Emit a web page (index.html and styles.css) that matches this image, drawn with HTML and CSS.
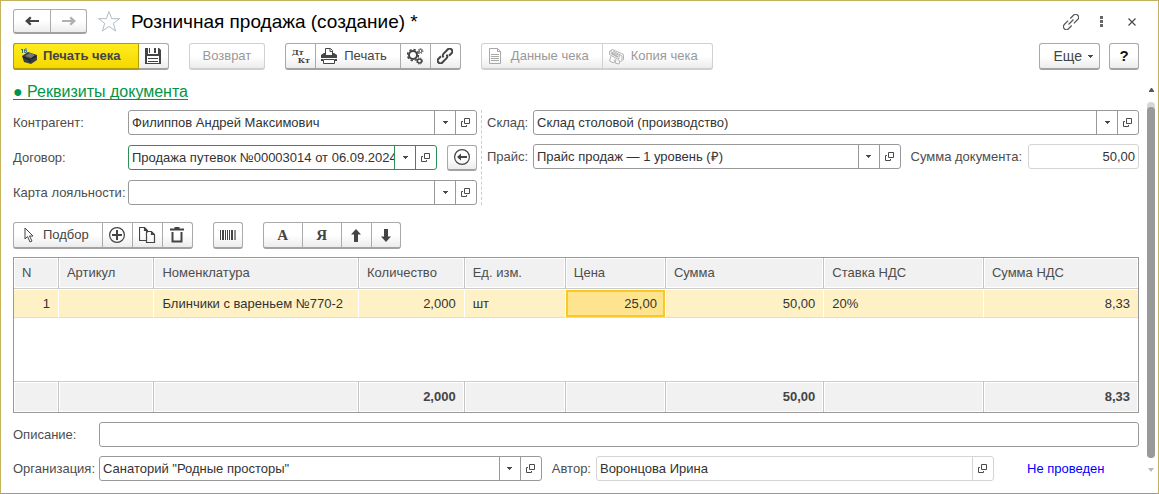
FILE: index.html
```html
<!DOCTYPE html>
<html lang="ru">
<head>
<meta charset="utf-8">
<title>Розничная продажа (создание) *</title>
<link rel="stylesheet" href="styles.css">
</head>
<body>
<svg class="sprite" aria-hidden="true">
  <symbol id="open" viewBox="0 0 10 10"><path d="M3.5 .5h5v5h-5zM2 3.500H.5v5h5V7" fill="none" stroke="#4a4a4a"/></symbol>
  <symbol id="caret" viewBox="0 0 5 3"><path d="M0 0h5v1H4v1H3v1H2V2H1V1H0z" fill="#4a4a4a"/></symbol>
</svg>
<main class="window">
  <header class="titlebar">
    <div class="group nav">
      <button class="btn" type="button" aria-label="Назад"><svg width="14" height="10" viewBox="0 0 14 10"><path d="M14 5H3" stroke="#444" stroke-width="2"/><path d="M0 5l5-4.500L6.500 2 4 5l2.500 3L5 9.500z" fill="#444"/></svg></button>
      <button class="btn" type="button" aria-label="Вперед"><svg width="14" height="10" viewBox="0 0 14 10"><path d="M0 5h11" stroke="#b0b0b0" stroke-width="2"/><path d="M14 5L9 .5 7.500 2 10 5 7.500 8 9 9.500z" fill="#b0b0b0"/></svg></button>
    </div>
    <button class="plain" type="button" aria-label="В избранное"><svg width="24" height="23" viewBox="0 0 24 23"><path d="M12 1.500l2.700 7.200h7.800l-6.200 4.700 2.300 7.600-6.600-4.600L5.400 21l2.300-7.600-6.200-4.700h7.800z" fill="#fff" stroke="#b4bac2"/></svg></button>
    <h1 class="title">Розничная продажа (создание) *</h1>
    <div class="tools">
      <button class="plain" type="button" aria-label="Ссылка"><svg width="16" height="16" viewBox="0 0 16 16"><g fill="none" stroke="#555" stroke-width="1.200" transform="rotate(-45 8 8)"><path d="M7 5H1.500a3 3 0 0 0 0 6H6M9 11h5.500a3 3 0 0 0 0-6H10M4.500 8h7"/></g></svg></button>
      <button class="plain" type="button" aria-label="Меню"><svg width="3" height="11" viewBox="0 0 3 11"><path d="M0 0h3v3H0zM0 4h3v3H0zM0 8h3v3H0z" fill="#666"/></svg></button>
      <button class="plain" type="button" aria-label="Закрыть"><svg width="8" height="8" viewBox="0 0 8 8"><path d="M.5.5l7 7M7.500.5l-7 7" stroke="#444" stroke-width="1.100"/></svg></button>
    </div>
  </header>

  <div class="toolbar">
    <div class="group">
      <button class="btn primary" type="button"><svg width="17" height="16" viewBox="0 0 17 16"><path d="M1 8l6-4 9 3v5l-6 4-7-2z" fill="#3a3d40"/><path d="M4 8l5-3 5 2-4 3z" fill="#777"/><path d="M2 9l7 3v2M10 11l5-3" stroke="#15181a" fill="none"/><path d="M0 1.500h2M1.500 1v4" stroke="#2d7a4a"/><path d="M4 1h2M3.500 1v3.500h2v-2h-2" stroke="#3b7bb0" fill="none"/></svg><span>Печать чека</span></button>
      <button class="btn icon" type="button" aria-label="Записать"><svg width="16" height="16" viewBox="0 0 16 16"><path d="M0 0h3v6h10V0h1l2 2v14H0z" fill="#444"/><path d="M9 0h2v5H9zM4 0h1v5H4z" fill="#444"/><path d="M2 8h12v7H2z" fill="#fff"/><path d="M3 10.500h10M3 13.500h10" stroke="#444"/></svg></button>
    </div>
    <div class="group"><button class="btn wide" type="button" disabled>Возврат</button></div>
    <div class="group">
      <button class="btn icon dtkt" type="button"><span class="dt">Дт</span><span class="kt">Кт</span></button>
      <button class="btn print" type="button"><svg width="16" height="16" viewBox="0 0 16 16"><path d="M4.500 6V.5h5l2 2V6M9 1v2.500h3" fill="none" stroke="#444"/><path d="M3 5h2v2h6V5h2l3 2v3H0V7zM0 11h2v1h12v-1h2v2H0z" fill="#444"/><path d="M2.500 11.500h11v4h-11z" fill="#fff" stroke="#444"/></svg><span>Печать</span></button>
      <button class="btn icon" type="button" aria-label="Настройки"><svg width="17" height="17" viewBox="0 0 17 17" fill="none" stroke="#444"><circle cx="6" cy="7" r="4" stroke-width="2"/><circle cx="6" cy="7" r="5.500" stroke-width="1.500" stroke-dasharray="2.300 2"/><circle cx="13.500" cy="3" r="1.500"/><circle cx="13.500" cy="3" r="2.400" stroke-dasharray="1 1"/><circle cx="12.500" cy="13" r="2" stroke-width="1.400"/><circle cx="12.500" cy="13" r="3" stroke-dasharray="1.300 1.100"/></svg></button>
      <button class="btn icon" type="button" aria-label="Связи"><svg width="16" height="16" viewBox="0 0 16 16"><g fill="none" stroke="#444" stroke-width="2" transform="rotate(-45 8 8)"><path d="M10 8a2.700 2.700 0 0 1-2.700 2.700H1.500a2.700 2.700 0 0 1 0-5.400H5M6 8a2.700 2.700 0 0 1 2.700-2.700h5.800a2.700 2.700 0 0 1 0 5.400H11"/></g></svg></button>
    </div>
    <div class="group">
      <button class="btn doc" type="button" disabled><svg width="12" height="16" viewBox="0 0 12 16"><path d="M.5.5h8l3 3v12H.5zM8.500.5v3h3M2 6.500h8M2 8.500h8M2 10.500h8M2 12.500h8" fill="none" stroke="#a8a8a8"/></svg><span>Данные чека</span></button>
      <button class="btn copy" type="button" disabled><svg width="17" height="17" viewBox="0 0 17 17" fill="none" stroke="#b4b4b4"><path d="M1.500 3.500l3-2 11 5v5l-3 2-2-1M1.500 3.500v3l9 5 1-4-9-4M4.500 1.500l-3 2M5 3l9 5v4M3 8l-1.500 5 4 2 2-4M8 12l-1 3 4 1 1-3"/><path d="M3 5l7 4" stroke-width="2"/></svg><span>Копия чека</span></button>
    </div>
    <div class="group end"><button class="btn more" type="button"><span>Еще</span><svg width="5" height="3"><use href="#caret"/></svg></button></div>
    <div class="group help"><button class="btn icon" type="button">?</button></div>
  </div>

  <div class="body">
    <div class="content">
      <a class="section" href="#details">● Реквизиты документа</a>
      <div class="details" id="details">
        <div class="left">
          <label for="f1">Контрагент:</label>
          <div class="field"><input id="f1" value="Филиппов Андрей Максимович"><button type="button" aria-label="Выбрать"><svg width="5" height="3"><use href="#caret"/></svg></button><button type="button" aria-label="Открыть"><svg width="10" height="10"><use href="#open"/></svg></button></div>
          <label for="f2">Договор:</label>
          <div class="pair">
            <div class="field active"><input id="f2" value="Продажа путевок №00003014 от 06.09.2024"><button type="button" aria-label="Выбрать"><svg width="5" height="3"><use href="#caret"/></svg></button><button type="button" aria-label="Открыть"><svg width="10" height="10"><use href="#open"/></svg></button></div>
            <div class="group"><button class="btn icon" type="button" aria-label="Заполнить"><svg width="16" height="16" viewBox="0 0 16 16"><circle cx="8" cy="8" r="7.400" fill="none" stroke="#444" stroke-width="1.200"/><path d="M13 7v2H7v2.500L3 8l4-3.500V7z" fill="#444"/></svg></button></div>
          </div>
          <label for="f3">Карта лояльности:</label>
          <div class="field"><input id="f3"><button type="button" aria-label="Выбрать"><svg width="5" height="3"><use href="#caret"/></svg></button><button type="button" aria-label="Открыть"><svg width="10" height="10"><use href="#open"/></svg></button></div>
        </div>
        <div class="right">
          <label for="f4">Склад:</label>
          <div class="field"><input id="f4" value="Склад столовой (производство)"><button type="button" aria-label="Выбрать"><svg width="5" height="3"><use href="#caret"/></svg></button><button type="button" aria-label="Открыть"><svg width="10" height="10"><use href="#open"/></svg></button></div>
          <label for="f5">Прайс:</label>
          <div class="pair">
            <div class="field"><input id="f5" value="Прайс продаж — 1 уровень (₽)"><button type="button" aria-label="Выбрать"><svg width="5" height="3"><use href="#caret"/></svg></button><button type="button" aria-label="Открыть"><svg width="10" height="10"><use href="#open"/></svg></button></div>
            <label for="f6">Сумма документа:</label>
            <div class="field readonly sum"><input id="f6" value="50,00" readonly></div>
          </div>
        </div>
      </div>

      <div class="toolbar commands">
        <div class="group">
          <button class="btn pick" type="button"><svg width="10" height="16" viewBox="0 0 10 16"><path d="M1 1v11l2.500-2.500L6 15l2-1-2.500-5H9z" fill="#fff" stroke="#444"/></svg><span>Подбор</span></button>
          <button class="btn icon" type="button" aria-label="Добавить"><svg width="16" height="16" viewBox="0 0 16 16"><circle cx="8" cy="8" r="7.400" fill="none" stroke="#444" stroke-width="1.200"/><path d="M8 3v10M3 8h10" stroke="#444" stroke-width="2"/></svg></button>
          <button class="btn icon" type="button" aria-label="Скопировать"><svg width="17" height="16" viewBox="0 0 17 16"><path d="M7.500 13.500h-7V.5h5l3 3v2M5.500.5v3h3M7.500 4.500h5l3 3v8h-8zM12.500 4.500v3h3" fill="none" stroke="#444" stroke-width="1.200"/></svg></button>
          <button class="btn icon" type="button" aria-label="Удалить"><svg width="14" height="16" viewBox="0 0 14 16"><path d="M0 2.500h14M4.500 1h5" stroke="#444" stroke-width="2"/><path d="M2.500 5v9.500h9V5" fill="none" stroke="#444" stroke-width="2"/></svg></button>
        </div>
        <div class="group"><button class="btn icon" type="button" aria-label="Штрихкод"><svg width="16" height="10" viewBox="0 0 16 10"><path d="M0 0h1v10H0zM2 0h2v10H2zM5 0h1v10H5zM7 0h1v10H7zM9 0h1v10H9zM11 0h2v10h-2zM14 0h.6v10H14zM15.400 0h.6v10h-.6z" fill="#444"/></svg></button></div>
        <div class="group">
          <button class="btn letter" type="button">А</button>
          <button class="btn letter" type="button">Я</button>
          <button class="btn icon" type="button" aria-label="Вверх"><svg width="10" height="13" viewBox="0 0 10 13"><path d="M5 0l5 5.500H7V13H3V5.500H0z" fill="#444"/></svg></button>
          <button class="btn icon last" type="button" aria-label="Вниз"><svg width="10" height="13" viewBox="0 0 10 13"><path d="M5 13l5-5.500H7V0H3v7.500H0z" fill="#444"/></svg></button>
        </div>
      </div>

      <table class="goods">
        <colgroup><col class="c1"><col class="c2"><col class="c3"><col class="c4"><col class="c5"><col class="c6"><col class="c7"><col class="c8"><col></colgroup>
        <thead><tr><th>N</th><th>Артикул</th><th>Номенклатура</th><th>Количество</th><th>Ед. изм.</th><th>Цена</th><th>Сумма</th><th>Ставка НДС</th><th>Сумма НДС</th></tr></thead>
        <tbody>
          <tr class="selected"><td class="num">1</td><td></td><td>Блинчики с вареньем №770-2</td><td class="num">2,000</td><td>шт</td><td class="num current">25,00</td><td class="num">50,00</td><td>20%</td><td class="num">8,33</td></tr>
          <tr class="empty"><td colspan="9"></td></tr>
        </tbody>
        <tfoot><tr><td></td><td></td><td></td><td class="num">2,000</td><td></td><td></td><td class="num">50,00</td><td></td><td class="num">8,33</td></tr></tfoot>
      </table>

      <div class="bottom">
        <label for="f7">Описание:</label>
        <div class="field"><input id="f7"></div>
        <label for="f8">Организация:</label>
        <div class="pair">
          <div class="field org"><input id="f8" value="Санаторий &quot;Родные просторы&quot;"><button type="button" aria-label="Выбрать"><svg width="5" height="3"><use href="#caret"/></svg></button><button type="button" aria-label="Открыть"><svg width="10" height="10"><use href="#open"/></svg></button></div>
          <label for="f9">Автор:</label>
          <div class="field readonly author"><input id="f9" value="Воронцова Ирина" readonly><button type="button" aria-label="Открыть"><svg width="10" height="10"><use href="#open"/></svg></button></div>
          <span class="status">Не проведен</span>
        </div>
      </div>
    </div>
    <div class="scroll" aria-hidden="true">
      <svg width="5" height="4" viewBox="0 0 5 4"><path d="M2 0h1l2 3v1H0V3z" fill="#555"/></svg>
      <div class="track"><div class="thumb"></div></div>
      <svg width="6" height="4" viewBox="0 0 6 4"><path d="M0 0h6L3 4z" fill="#b8b8b8"/></svg>
    </div>
  </div>
</main>
</body>
</html>
```
FILE: styles.css
```css
* { box-sizing: border-box; }

body {
  margin: 0;
  background: #fff;
  color: #333;
  font: 13px/16px "Liberation Sans", Arial, sans-serif;
}

button, input { font: inherit; color: inherit; margin: 0; }
button { padding: 0; }
svg { display: block; flex: none; }
.sprite { position: absolute; width: 0; height: 0; }

.window {
  display: flex;
  flex-direction: column;
  min-height: 100vh;
  border: 1px solid #c6b25c;
  border-bottom-color: #999;
  padding-left: 12px;
}

/* Buttons */
.group {
  display: flex;
  flex: none;
  height: 27px;
  border: 1px solid #aaa;
  border-bottom: 2px solid #a2a2a2;
  border-radius: 3px;
  background: linear-gradient(#fff 50%, #ececec);
}
.btn {
  display: flex;
  align-items: center;
  justify-content: center;
  gap: 9px;
  border: 0;
  background: none;
  color: #444;
  white-space: nowrap;
}
.btn + .btn { border-left: 1px solid #aaa; }
.btn:disabled { color: #999; }
.group:has(.btn:disabled) { border-color: #d0d0d0; }
.btn:disabled + .btn:disabled { border-color: #d0d0d0; }
.icon { width: 30px; }
.icon:first-child, .last { width: 29px; }
.icon:only-child { width: 28px; }
.plain { border: 0; background: none; }

/* Title bar */
.titlebar {
  display: flex;
  align-items: center;
  height: 42px;
  padding: 0 22px 1px 0;
}
.nav { height: 25px; margin-right: 10px; }
.nav .btn { width: 36px; }
.title {
  margin: 0 0 0 10px;
  color: #000;
  font-size: 19px;
  font-weight: 400;
  line-height: 24px;
}
.tools { display: flex; align-items: center; gap: 25px; margin-left: auto; }
.tools .plain:nth-child(2) { margin-left: -4px; }

/* Toolbars */
.toolbar { display: flex; gap: 20px; padding-right: 19px; }
.primary {
  gap: 5px;
  margin: -1px 0 -2px -1px;
  padding: 0 17px 0 7px;
  border: 1px solid #b19c07;
  border-bottom: 2px solid #b09a05;
  border-radius: 3px 0 0 3px;
  background: linear-gradient(#ffec1f, #f5d800);
  font-weight: 700;
}
.primary + .btn { border-left: 0; width: 29px; }
.wide { padding: 0 13px; }
.dtkt {
  flex-direction: column;
  gap: 0;
  font: 700 8px/8px "DejaVu Serif", serif;
}
.dt { padding-right: 6px; }
.kt { padding-left: 6px; }
.print, .doc { padding: 0 13px 0 5px; gap: 7px; }
.doc { padding-left: 7px; gap: 10px; }
.copy { padding: 0 14px 0 5px; gap: 6px; }
.end { margin-left: auto; }
.more { gap: 6px; padding: 0 6px 0 14px; font-size: 14px; }
.help { margin-left: -11px; color: #000; }
.help .btn { color: #111; font-size: 15px; font-weight: 700; }
.commands { margin-top: 17px; padding-right: 0; }
.pick { gap: 9px; padding: 0 13px 0 10px; }
.letter { width: 39px; font: 700 15px/16px "Liberation Serif", serif; }
.letter:first-child { width: 38px; }

/* Form */
.body { display: flex; flex: 1; }
.content { flex: 1; min-width: 0; padding: 13px 0 12px; }
.section {
  display: block;
  width: fit-content;
  height: 17px;
  border-bottom: 1px solid #009646;
  color: #009646;
  font-size: 16px;
  line-height: 17px;
  text-decoration: none;
}
.details {
  display: grid;
  grid-template-columns: 469px 1fr;
  margin-top: 10px;
}
.left, .right, .bottom {
  display: grid;
  grid-template-columns: 115px 1fr;
  align-content: start;
  align-items: center;
  row-gap: 10px;
}
.left {
  grid-auto-rows: 25px;
  padding-right: 4px;
  border-right: 1px dashed #ccc;
}
.right { grid-template-columns: 46px 1fr; padding-left: 5px; row-gap: 9px; }
.bottom { grid-template-columns: 86px 1fr; margin-top: 9px; row-gap: 9px; }
.pair { display: flex; align-items: center; gap: 10px; min-width: 0; }
.pair .group { height: 26px; }
label { color: #4d4d4d; white-space: nowrap; }
.field {
  display: flex;
  flex: 1;
  min-width: 0;
  height: 25px;
  border: 1px solid #999;
  border-radius: 3px;
  background: #fff;
}
.field input {
  flex: 1;
  width: 0;
  min-width: 0;
  padding: 0 0 0 3px;
  border: 0;
  outline: 0;
  background: none;
}
.field button {
  display: grid;
  place-items: center;
  flex: none;
  width: 21px;
  border: 0;
  border-left: 1px solid #999;
  background: none;
}
.active, .active button { border-color: #2f8f5b; }
.readonly, .readonly button { border-color: #d4d4d4; }
.sum { flex: none; width: 111px; }
.sum input { padding-right: 3px; text-align: right; }
.pair .sum { margin-left: -4px; }
.org { flex: 443; }
.author { flex: 398; margin-left: -5px; }
.status { width: 135px; padding-left: 23px; color: #00f; }

/* Goods table */
.goods {
  width: 100%;
  margin-top: 8px;
  border: 1px solid #999;
  border-collapse: separate;
  border-spacing: 0;
  table-layout: fixed;
}
.c1 { width: 4%; }
.c2 { width: 8.500%; }
.c3 { width: 18.200%; }
.c4 { width: 9.400%; }
.c5 { width: 9%; }
.c6 { width: 8.900%; }
.c7 { width: 14.100%; }
.c8 { width: 14.200%; }
.goods th, .goods td { height: 31px; padding: 0 8px; }
.goods th { padding-bottom: 1px; color: #4d4d4d; font-weight: 400; text-align: left; border-bottom: 1px solid #ccc; }
.goods th, .goods tfoot td {
  border-right: 1px solid #c4c4c4;
  background: #f1f1f1;
  box-shadow: inset 0 0 0 1px #fff;
}
.goods tfoot td { border-top: 1px solid #ccc; color: #444; font-weight: 700; }
.goods th:last-child, .goods tr td:last-child { border-right: 0; }
.goods .num { text-align: right; }
.goods .selected td {
  height: 29px;
  border-top: 1px solid #fff;
  border-right: 1px solid #fff;
  border-bottom: 1px solid #ddd;
  background: #fff1c6;
}
.goods .selected .current { background: #ffe48f; box-shadow: inset 0 0 0 2px #fac824; }
.goods .empty td { height: 63px; }

/* Scrollbar */
.scroll {
  display: flex;
  flex-direction: column;
  align-items: center;
  gap: 10px;
  width: 8px;
  margin: 18px 3px 21px 8px;
}
.track { flex: 1; width: 8px; padding-top: 5px; border-radius: 4px; background: #d6d6d6; }
.thumb { height: 100%; border-radius: 4px; background: #999; }
```
